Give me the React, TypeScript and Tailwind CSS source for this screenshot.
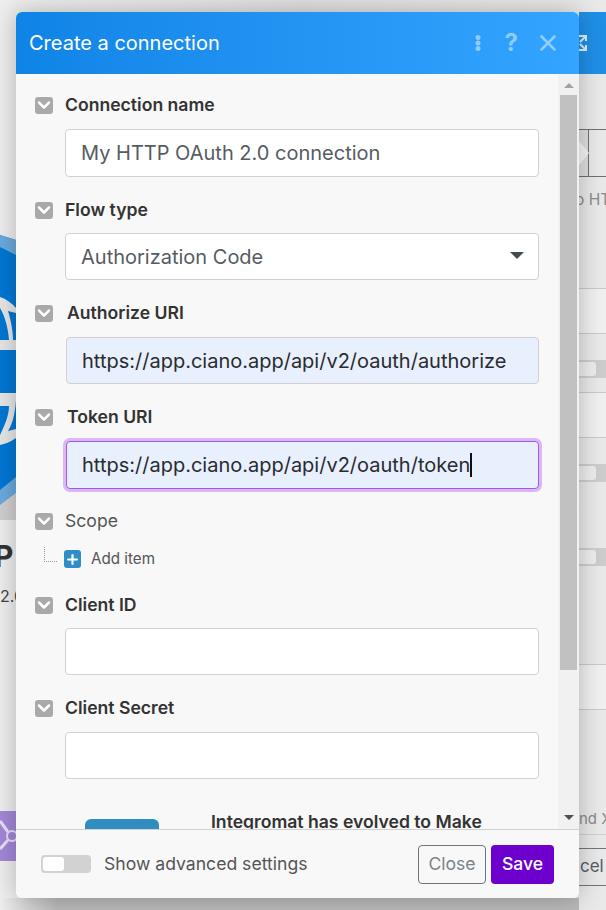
import React from 'react';
import { X, ChevronDown, Plus } from 'lucide-react';

const font = { fontFamily: 'Inter, "Liberation Sans", sans-serif' };

function Toggle() {
  return (
    <span className="flex h-[17px] w-[18px] shrink-0 items-center justify-center rounded-[3px] bg-[#a9a9a9]">
      <ChevronDown size={20} strokeWidth={3} className="shrink-0 text-white" />
    </span>
  );
}

function Label({ text, bold = true, shift = false }: { text: string; bold?: boolean; shift?: boolean }) {
  return (
    <div className="flex h-[24px] items-center">
      <Toggle />
      <span
        className={`text-[17.6px] ${shift ? 'ml-[14px]' : 'ml-[12px]'} ${bold ? 'font-semibold text-[#333]' : 'font-normal text-[#555]'}`}
      >
        {text}
      </span>
    </div>
  );
}

function Field({ value, tall = false, tight = false }: { value?: string; tall?: boolean; tight?: boolean }) {
  return (
    <div
      className={`ml-[30px] flex w-[474px] items-center rounded-[4px] border border-[#d1d1d1] bg-white px-[15px] text-[20px] text-[#555c63] ${tight ? 'mt-[11px]' : 'mt-[12px]'} ${tall ? 'h-[48px]' : 'h-[47px]'}`}
    >
      {value}
    </div>
  );
}

function UriField({ value, focused = false }: { value: string; focused?: boolean }) {
  return (
    <div
      className={`ml-[31px] mt-[12px] flex w-[473px] items-center rounded-[4px] border bg-[#e8f0fd] px-[15px] text-[20px] text-[#282c30] ${focused ? 'h-[48px] border-[#a855f7] shadow-[0_0_0_3px_#d8b9f3]' : 'h-[47px] border-[#d1d1d1]'}`}
    >
      <span>{value}</span>
      {focused && <span className="h-[24px] w-[2px] bg-[#111]" />}
    </div>
  );
}

function Backdrop() {
  return (
    <div className="absolute inset-0 overflow-hidden bg-gradient-to-r from-[#eeeeee] via-[#e0e0e0] to-[#e9e9e9]">
      <div className="absolute bottom-0 left-0 h-[12px] w-[579px] bg-gradient-to-r from-transparent via-[#b9b9b9] via-10% to-[#b9b9b9]" />
      {/* app logo behind the dialog */}
      <svg className="absolute left-0 top-[200px]" width="16" height="320" viewBox="0 0 16 320">
        <path d="M0 35 L16 40 V55 L16 293 L0 305 Z" fill="#0077d4" />
        <path d="M0 35 L16 40 V55 L0 47 Z" fill="#6aa9de" />
        <path d="M0 290 L16 277 V293 L0 305 Z" fill="#6aa9de" />
        <path d="M0 305 L16 293 V320 H0 Z" fill="#cfcfcf" />
        <path
          d="M0 97 C6 99 12 103 16 108 V113 L8 111 C11 120 13 132 13 140 H16 V150 H0 V140 H9 C8 128 5 116 0 108 Z"
          fill="#e6e6e6"
        />
        <path
          d="M0 193 H16 V200 C15 215 12 225 8 231 L16 229 V238 C10 242 5 244 0 245 V235 C5 225 9 215 9 206 H0 Z"
          fill="#e6e6e6"
        />
      </svg>
      <span className="absolute left-[-6px] top-[536px] text-[30px] font-bold leading-[40px] text-[#333]">P</span>
      <span className="absolute left-0 top-[585px] text-[16px] leading-[22px] text-[#444]">2.0</span>
      <div className="absolute left-0 top-[811px] flex h-[50px] w-[16px] items-center bg-[#a387d8]">
        <svg width="16" height="50" viewBox="0 0 16 50">
          <circle cx="12" cy="25" r="5" stroke="#e6e0f5" strokeWidth="2" fill="none" />
          <path d="M0 10 L8 21 M0 38 L8 29" stroke="#e6e0f5" strokeWidth="3" />
        </svg>
      </div>
      {/* right strip */}
      <div className="absolute right-0 top-[12px] flex h-[62px] w-[27px] items-center bg-[#1f8fe6]">
        <svg className="ml-[-9px]" width="18" height="18" viewBox="0 0 18 18" fill="none" stroke="#dcecfb" strokeWidth="2">
          <path d="M7 2 H16 V7 M16 2 L10 8 M7 16 H16 V11 M16 16 L10 10" />
        </svg>
      </div>
      <div className="absolute right-0 top-[129px] h-[48px] w-[27px] border-y border-[#6b7075]">
        <div className="absolute left-0 top-0 h-full w-[10px] border-r border-[#6b7075] bg-[#dedede]" />
        <div className="absolute left-0 top-[11px] h-0 w-0 border-y-[12px] border-l-[10px] border-y-transparent border-l-[#f5f5f5]" />
      </div>
      <span className="absolute left-[575px] top-[188px] whitespace-nowrap text-[15.5px] text-[#8a8a8a]">o HT</span>
      {[288, 392, 664].map(y => (
        <div key={y} className="absolute right-0 h-[46px] w-[27px] border-y border-[#c9c9c9] bg-[#f0f0f0]" style={{ top: y }} />
      ))}
      {[360, 464, 548].map(y => (
        <div key={y} className="absolute right-0 h-[18px] w-[27px] bg-[#cdcdcd]" style={{ top: y }}>
          <div className="h-[14px] w-[17px] translate-y-[2px] rounded-r-[3px] bg-[#ededed]" />
        </div>
      ))}
      <span className="absolute left-[579px] top-[808px] whitespace-nowrap text-[15px] text-[#8a8a8a]">nd X</span>
      <div className="absolute right-0 h-px w-[27px] bg-[#d0d0d0]" style={{ top: 834 }} />
      <div className="absolute right-0 top-[848px] flex h-[38px] w-[27px] items-center border-y border-[#70757a] text-[17px] text-[#555c63]">
        <span className="ml-[1px] whitespace-nowrap">cel</span>
      </div>
    </div>
  );
}

export default function App() {
  return (
    <div className="relative h-[910px] w-[606px] overflow-hidden" style={font}>
      <Backdrop />
      <div className="relative pl-[16px] pt-[12px]">
        <div className="flex h-[886px] w-[563px] flex-col overflow-hidden rounded-[6px] bg-[#f8f8f8] shadow-[0_0_24px_rgba(0,0,0,0.25)]">
          <div className="flex h-[62px] shrink-0 items-center bg-gradient-to-r from-[#0f84e6] to-[#33a4ff] pl-[13px]">
            <h1 className="text-[20px] font-normal text-white">Create a connection</h1>
            <div className="ml-auto flex items-center text-[#8fccff]">
              <svg className="mr-[24px]" width="6" height="16" viewBox="0 0 6 16" fill="currentColor">
                <circle cx="3" cy="2.5" r="2.5" />
                <circle cx="3" cy="8" r="2.5" />
                <circle cx="3" cy="13.5" r="2.5" />
              </svg>
              <span className="mr-[17px] text-[24px] font-bold leading-none">?</span>
              <X size={26} strokeWidth={2.4} className="mr-[18px]" />
            </div>
          </div>

          <div className="flex min-h-0 flex-1">
            <div className="min-w-0 flex-1 overflow-hidden pl-[19px] pt-[19px]">
              <Label text="Connection name" />
              <Field value="My HTTP OAuth 2.0 connection" tall />
              <div className="mt-[21px]">
                <Label text="Flow type" />
              </div>
              <div className="relative">
                <Field value="Authorization Code" tight />
                <span className="absolute right-[34px] top-[19px] h-0 w-0 border-x-[7px] border-t-[7px] border-x-transparent border-t-[#454b52]" />
              </div>
              <div className="mt-[21px]">
                <Label text="Authorize URI" shift />
              </div>
              <UriField value="https://app.ciano.app/api/v2/oauth/authorize" />
              <div className="mt-[21px]">
                <Label text="Token URI" shift />
              </div>
              <UriField value="https://app.ciano.app/api/v2/oauth/token" focused />
              <div className="mt-[20px]">
                <Label text="Scope" bold={false} />
              </div>
              <div className="mt-[14px] flex h-[24px] items-center">
                <span className="mb-[10px] ml-[9px] h-[15px] w-[13px] border-b border-l border-dotted border-[#999]" />
                <span className="ml-[7px] flex h-[18px] w-[17px] items-center justify-center rounded-[3px] bg-[#2f8fc4]">
                  <Plus size={15} strokeWidth={3.5} className="text-white" />
                </span>
                <span className="ml-[10px] text-[15.2px] text-[#555]">Add item</span>
              </div>
              <div className="mt-[22px]">
                <Label text="Client ID" />
              </div>
              <Field tight />
              <div className="mt-[21px]">
                <Label text="Client Secret" />
              </div>
              <Field />
              <div className="ml-[50px] mt-[40px] flex">
                <div className="h-[60px] w-[74px] shrink-0 rounded-[6px] bg-[#318dbf]" />
                <div className="ml-[52px] whitespace-nowrap text-[17.6px] font-semibold leading-[6px] text-[#333]">Integromat has evolved to Make</div>
              </div>
            </div>

            <div className="flex w-[21px] shrink-0 flex-col items-center bg-[#f1f1f1]">
              <span className="mt-[9px] h-0 w-0 border-x-[5px] border-b-[5px] border-x-transparent border-b-[#a3a3a3]" />
              <div className="mt-[7px] h-[575px] w-[17px] bg-[#c1c1c1]" />
              <span className="mb-[9px] mt-auto h-0 w-0 border-x-[5px] border-t-[5px] border-x-transparent border-t-[#505050]" />
            </div>
          </div>

          <div className="flex h-[69px] shrink-0 items-center border-t border-[#d1d1d1] bg-[#f8f8f8] pl-[25px] pr-[25px]">
            <span className="relative h-[18px] w-[50px] rounded-[4px] bg-[#d2d2d2]">
              <span className="absolute left-[2px] top-[2px] h-[14px] w-[21px] rounded-[3px] bg-white" />
            </span>
            <span className="ml-[13px] text-[17.6px] text-[#555]">Show advanced settings</span>
            <button className="ml-auto h-[39px] w-[68px] rounded-[4px] border border-[#6c757d] text-[17.6px] text-[#7a828a]">Close</button>
            <button className="ml-[5px] h-[39px] w-[63px] rounded-[4px] bg-[#6d00cc] text-[17.6px] font-medium text-white">Save</button>
          </div>
        </div>
      </div>
    </div>
  );
}
